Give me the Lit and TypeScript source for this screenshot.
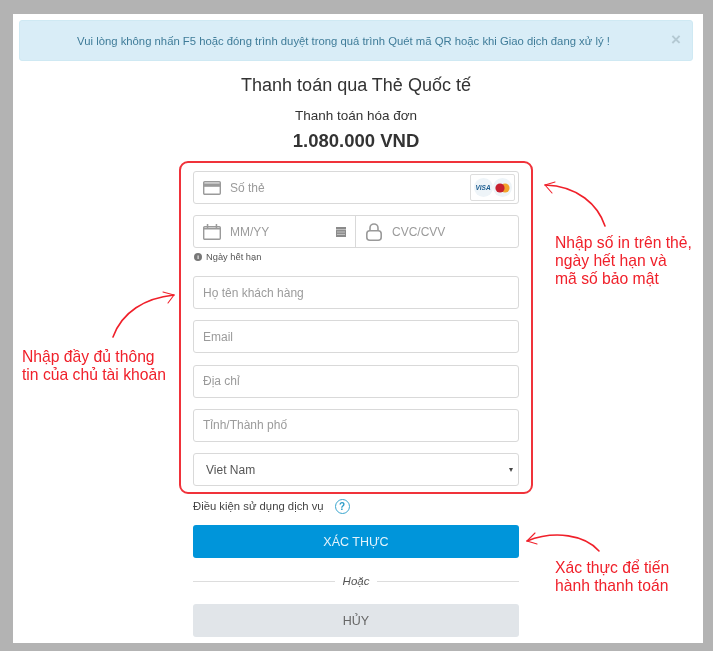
import { LitElement, html, css, svg } from "lit";
import { customElement } from "lit/decorators.js";

const cardIcon = svg`<svg class="ic" width="18" height="14" viewBox="0 0 18 14"><rect x=".7" y=".7" width="16.6" height="12.6" rx="1" fill="none" stroke="#9a9a9a" stroke-width="1.4"/><rect x="1" y="2.4" width="16" height="3.4" fill="#9a9a9a"/></svg>`;
const calIcon = svg`<svg class="ic" width="18" height="16" viewBox="0 0 18 16"><rect x=".7" y="2.7" width="16.6" height="12.6" rx="1" fill="none" stroke="#9a9a9a" stroke-width="1.4"/><path d="M1 4h16v1.6H1zM3.8 0h1.5v4H3.800zM12.700 0h1.500v4h-1.500z" fill="#9a9a9a"/></svg>`;
const lockIcon = svg`<svg class="ic" width="16" height="18" viewBox="0 0 16 18"><rect x=".8" y="7.800" width="14.400" height="9.400" rx="3" fill="none" stroke="#9a9a9a" stroke-width="1.600"/><path d="M4 8V5a4 4 0 0 1 8 0v3" fill="none" stroke="#9a9a9a" stroke-width="1.600"/></svg>`;
const miniCal = svg`<svg width="10" height="11" viewBox="0 0 10 11"><path d="M0 1h10V11H0z" fill="#8a8a8a"/><path d="M0 3.600h10M1 6h8M1 8.400h8" stroke="#fff" stroke-width=".5"/></svg>`;

@customElement("app-root")
export class AppRoot extends LitElement {
  static styles = css`
    :host { display: block; font-family: "Liberation Sans", Arial, sans-serif; }
    .frame { position: relative; box-sizing: border-box; width: 713px; height: 651px; background: #b3b3b3; padding: 14px 10px 8px 13px; overflow: hidden; filter: blur(0.3px); }
    .panel { box-sizing: border-box; height: 629px; background: #fff; padding: 6px 10px 0 6px; display: flex; flex-direction: column; align-items: center; }
    .alert { box-sizing: border-box; width: 674px; height: 41px; background: #d9edf7; border: 1px solid #cfe9f3; border-radius: 3px; color: #3f7c99; font-size: 11.3px; display: flex; align-items: center; justify-content: center; position: relative; padding-right: 25px; }
    .close { position: absolute; right: 11px; top: 10px; font-size: 17px; line-height: 18px; font-weight: 700; color: #b4c9d3; }
    .title { margin-top: 12px; font-size: 18px; line-height: 24px; color: #333; }
    .sub { margin-top: 9px; font-size: 13.5px; line-height: 20px; color: #333; }
    .amount { margin-top: 3px; font-size: 18.5px; line-height: 24px; font-weight: 700; color: #333; }
    .box { box-sizing: border-box; width: 354px; margin-top: 8px; border: 2px solid #f0323a; border-radius: 9px; padding: 8px 12px 6px; display: flex; flex-direction: column; }
    .field { box-sizing: border-box; height: 33px; border: 1px solid #d9d9d9; border-radius: 3px; display: flex; align-items: center; font-size: 12px; color: #9b9b9b; padding-left: 9px; gap: 9px; background: #fff; position: relative; }
    .stack { display: flex; flex-direction: column; gap: 11.25px; margin-top: 13px; }
    .pair { display: flex; margin-top: 11px; height: 33px; box-sizing: border-box; border: 1px solid #d9d9d9; border-radius: 3px; font-size: 12px; color: #9b9b9b; }
    .half { display: flex; align-items: center; }
    .left { width: 162px; box-sizing: border-box; padding: 0 9px; gap: 9px; border-right: 1px solid #d9d9d9; }
    .left .txt { flex: 1; }
    .right { flex: 1; padding-left: 10px; gap: 10px; }
    .ic { flex: none; }
    .badge { position: absolute; right: 3px; top: 2px; box-sizing: border-box; width: 45px; height: 27px; border: 1px solid #ddd; border-radius: 2px; display: flex; align-items: center; justify-content: center; }
    .visa { width: 19px; height: 19px; border-radius: 50%; background: #eef4f8; color: #1d5e91; font-size: 6.5px; font-weight: 700; font-style: italic; display: flex; align-items: center; justify-content: center; }
    .mc { width: 19px; height: 19px; border-radius: 50%; background: #eef4f8; display: flex; align-items: center; justify-content: center; }
    .hint { margin-top: 3px; padding-left: 1px; display: flex; align-items: center; gap: 4px; height: 12px; font-size: 9.3px; color: #555; }
    .info { width: 8px; height: 8px; border-radius: 50%; background: #777; color: #fff; font-size: 6px; line-height: 8px; text-align: center; font-weight: 700; }
    .select { padding-left: 12px; color: #555; justify-content: space-between; padding-right: 5px; }
    .arrow { width: 0; height: 0; border-left: 2.5px solid transparent; border-right: 2.5px solid transparent; border-top: 4px solid #444; }
    .col { width: 326px; display: flex; flex-direction: column; }
    .terms { margin-top: 4px; height: 16px; display: flex; align-items: center; gap: 11px; font-size: 11.3px; color: #444; }
    .q { box-sizing: border-box; width: 15px; height: 15px; border: 1.3px solid #3ba6cf; border-radius: 50%; color: #2a9bc7; font-size: 10px; font-weight: 700; display: flex; align-items: center; justify-content: center; }
    .btn { height: 33px; border-radius: 3px; display: flex; align-items: center; justify-content: center; font-size: 12.5px; }
    .primary { margin-top: 11px; background: #0095da; color: #e4f3fb; }
    .or { margin-top: 15px; height: 16px; display: flex; align-items: center; gap: 8px; font-size: 11.5px; font-style: italic; color: #555; }
    .or i { flex: 1; height: 1px; background: #ddd; }
    .cancel { margin-top: 15px; background: #e1e5e9; color: #666; }
    .note { position: absolute; color: #f0202a; font-size: 15.7px; line-height: 18px; white-space: nowrap; }
    .n1 { left: 555px; top: 234px; }
    .n2 { left: 22px; top: 348px; }
    .n3 { left: 555px; top: 559px; }
    .arrows { position: absolute; inset: 0; pointer-events: none; }
  `;

  render() {
    return html`
      <div class="frame">
        <div class="panel">
          <div class="alert">
            <span>Vui lòng không nhấn F5 hoặc đóng trình duyệt trong quá trình Quét mã QR hoặc khi Giao dịch đang xử lý !</span>
            <span class="close">×</span>
          </div>
          <div class="title">Thanh toán qua Thẻ Quốc tế</div>
          <div class="sub">Thanh toán hóa đơn</div>
          <div class="amount">1.080.000 VND</div>
          <div class="box">
            <div class="field">
              ${cardIcon}<span>Số thẻ</span>
              <div class="badge">
                <span class="visa">VISA</span>
                <span class="mc"><svg width="15" height="10" viewBox="0 0 15 10"><circle cx="10" cy="5" r="4.6" fill="#f2a32c"/><circle cx="5" cy="5" r="4.6" fill="#c7202f"/></svg></span>
              </div>
            </div>
            <div class="pair">
              <div class="half left">${calIcon}<span class="txt">MM/YY</span>${miniCal}</div>
              <div class="half right">${lockIcon}<span>CVC/CVV</span></div>
            </div>
            <div class="hint"><span class="info">i</span><span>Ngày hết hạn</span></div>
            <div class="stack">
              <div class="field">Họ tên khách hàng</div>
              <div class="field">Email</div>
              <div class="field">Địa chỉ</div>
              <div class="field">Tỉnh/Thành phố</div>
              <div class="field select"><span>Viet Nam</span><span class="arrow"></span></div>
            </div>
          </div>
          <div class="col">
            <div class="terms"><span>Điều kiện sử dụng dịch vụ</span><span class="q">?</span></div>
            <div class="btn primary">XÁC THỰC</div>
            <div class="or"><i></i><span>Hoặc</span><i></i></div>
            <div class="btn cancel">HỦY</div>
          </div>
        </div>
        <div class="note n1">Nhập số in trên thẻ,<br />ngày hết hạn và<br />mã số bảo mật</div>
        <div class="note n2">Nhập đầy đủ thông<br />tin của chủ tài khoản</div>
        <div class="note n3">Xác thực để tiến<br />hành thanh toán</div>
        <svg class="arrows" width="713" height="651" viewBox="0 0 713 651" fill="none" stroke="#f0202a" stroke-linecap="round" stroke-linejoin="round">
          <path d="M605 226C598 205 578 186 545 185" stroke-width="1.6" />
          <path d="M555 182L545 185L552 193" stroke-width="1.1" />
          <path d="M113 337C122 312 145 298 174 295" stroke-width="1.6" />
          <path d="M163 292L174 295L168 303" stroke-width="1.1" />
          <path d="M599 551C585 535 555 530 527 541" stroke-width="1.6" />
          <path d="M535 533L527 541L537 544" stroke-width="1.1" />
        </svg>
      </div>
    `;
  }
}
